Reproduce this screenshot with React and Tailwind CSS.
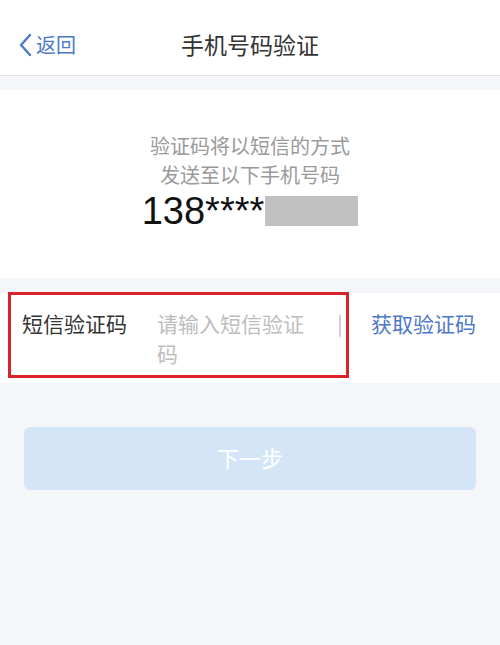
import React from 'react';

const font = { fontFamily: '"Noto Sans CJK SC", "Noto Sans", sans-serif' };

const App = () => {
  return (
    <div className="w-[500px] h-[645px] bg-[#f5f6fa] flex flex-col" style={font}>
      {/* Header */}
      <div className="h-[76px] bg-white border-b border-[#e2e3ea] flex items-end pb-[18px] relative">
        <div className="flex items-center pl-[18px] text-[#4d78c8] text-[20px] leading-none">
          <svg width="14" height="24" viewBox="0 0 14 24" className="mr-[4px]">
            <path d="M12 2 L3 12 L12 22" fill="none" stroke="#4d78c8" strokeWidth="2.4" strokeLinecap="round" strokeLinejoin="round" />
          </svg>
          <span>返回</span>
        </div>
        <div className="absolute left-0 right-0 bottom-[19px] text-center text-[23px] leading-none text-[#333]">
          手机号码验证
        </div>
      </div>

      {/* Phone info */}
      <div className="mt-[14px] bg-white h-[188px] flex flex-col items-center pt-[41px]">
        <p className="text-[20px] leading-[29px] text-[#9a9a9a]">验证码将以短信的方式</p>
        <p className="text-[20px] leading-[29px] text-[#9a9a9a]">发送至以下手机号码</p>
        <div className="flex items-center mt-[5px]">
          <span className="text-[38px] leading-[34px] text-[#111]" style={{ fontFamily: '"Liberation Sans", sans-serif' }}>138****</span>
          <span className="w-[93px] h-[30px] bg-[#c1c1c1] ml-[1px]" />
        </div>
      </div>

      {/* Code input row */}
      <div className="mt-[15px] bg-white h-[90px] flex items-start pt-[15px] relative">
        <span className="ml-[22px] w-[135px] text-[21px] leading-[30px] text-[#333]">短信验证码</span>
        <span className="w-[160px] text-[21px] leading-[30px] text-[#bdbdbd]">请输入短信验证码</span>
        <span className="w-[2px] h-[22px] bg-[#cfcfd6] mt-[7px] ml-[22px]" />
        <span className="ml-[30px] text-[21px] leading-[30px] text-[#4d78c8]">获取验证码</span>
        <div className="absolute left-[8px] top-[-1px] w-[341px] h-[86px] border-[3px] border-[#d8232a]" />
      </div>

      {/* Next button */}
      <div className="px-[24px] mt-[44px]">
        <div className="h-[63px] rounded-[6px] bg-[#d5e5f8] flex items-center justify-center pb-[3px] text-white text-[22px]">
          下一步
        </div>
      </div>
    </div>
  );
};

export default App;
